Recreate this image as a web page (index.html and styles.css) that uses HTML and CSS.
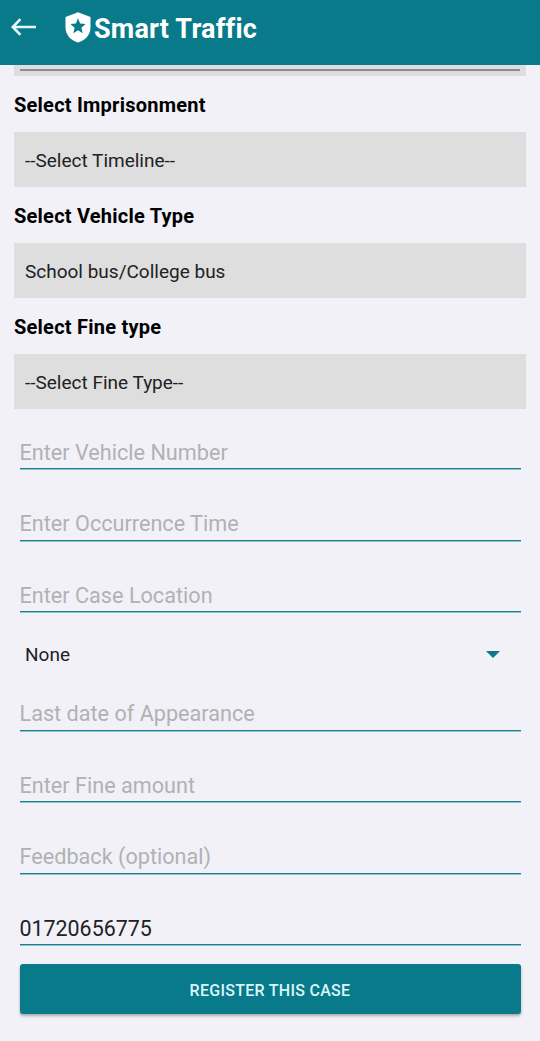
FILE: index.html
```html
<!DOCTYPE html>
<html lang="en">
<head>
<meta charset="utf-8">
<title>Smart Traffic</title>
<link rel="stylesheet" href="styles.css">
</head>
<body>
<header class="bar">
  <svg class="back" viewBox="0 0 26 20" width="26" height="20"><path d="M9.400 2.200 1.800 10l7.600 7.800M2 10h23"/></svg>
  <svg class="shield" viewBox="0 0 26 31" width="26" height="31"><path class="plate" d="M13 .2 25.500 5v10.500c0 7-5 13-12.500 15C5.500 28.500.5 22.500.5 15.500V5z"/><path class="star" d="m13 6.300 2.100 5.300 5.500.4-4.200 3.700 1.300 5.500-4.700-3-4.700 3 1.300-5.500-4.200-3.700 5.500-.4z"/></svg>
  <h1 class="title"><span>Smart Traffic</span></h1>
</header>
<main class="form">
  <div class="clipped"></div>
  <h2 class="label"><span>Select Imprisonment</span></h2>
  <div class="box"><span>--Select Timeline--</span></div>
  <h2 class="label"><span>Select Vehicle Type</span></h2>
  <div class="box"><span>School bus/College bus</span></div>
  <h2 class="label"><span>Select Fine type</span></h2>
  <div class="box"><span>--Select Fine Type--</span></div>
  <div class="fields">
    <div class="field first"><span>Enter Vehicle Number</span></div>
    <div class="field"><span>Enter Occurrence Time</span></div>
    <div class="field"><span>Enter Case Location</span></div>
  </div>
  <div class="spinner"><span>None</span><svg viewBox="0 0 14 7" width="14" height="7"><path d="M0 0h14L7 7z"/></svg></div>
  <div class="fields">
    <div class="field after"><span>Last date of Appearance</span></div>
    <div class="field"><span>Enter Fine amount</span></div>
    <div class="field"><span>Feedback (optional)</span></div>
    <div class="field filled"><span>01720656775</span></div>
  </div>
  <button class="register"><span>REGISTER THIS CASE</span></button>
</main>
</body>
</html>
```
FILE: styles.css
```css
* { box-sizing: border-box; }
body { margin: 0; height: 1041px; overflow: hidden; background: #f1f1f7; color: #212125; font-family: Roboto, sans-serif; }
.bar { height: 65px; display: flex; align-items: flex-start; padding: 12px 0 0 11px; background: #097a8a; }
.back { margin-top: 5px; fill: none; stroke: #e6f7f9; stroke-width: 2.6; }
.shield { margin-left: 27.5px; }
.plate { fill: #fff; }
.star { fill: #097a8a; }
.title { margin: 0 0 0 3.5px; color: #fff; font-size: 27px; line-height: 34px; font-weight: 700; letter-spacing: .2px; white-space: nowrap; }
.form { padding: 0 14px; }
.clipped { height: 11px; padding: 4px 6px 0; background: #dedede; }
.clipped::before { content: ""; display: block; height: 1.5px; background: #8c8c8c; }
.label { margin: 0; height: 56px; line-height: 58px; font-size: 20px; font-weight: 700; letter-spacing: .23px; color: #000; white-space: nowrap; }
.box { height: 55px; padding-left: 11px; background: #dedede; line-height: 57px; font-size: 19px; white-space: nowrap; }
.fields { padding: 0 5.5px; }
.field { height: 71.5px; display: flex; flex-direction: column; justify-content: flex-end; background: linear-gradient(#1d7f8e 1px, #8fc3cc 1px) bottom / 100% 2px no-repeat; padding-bottom: 4.5px; font-size: 21.65px; line-height: 26px; color: #b1b1b5; white-space: nowrap; }
.first { height: 61px; }
.after { height: 58px; }
.filled { color: #212125; font-size: 21.4px; }
.spinner { height: 60.5px; padding: 22px 26px 0 11px; display: flex; align-items: center; justify-content: space-between; font-size: 19px; }
.spinner svg { fill: #097a8a; }
.register { display: block; width: 501px; height: 50px; margin: 18px 0 0 5.5px; padding: 3px 0 0; border: 0; border-radius: 3px; background: #097a8a; color: #d9f7fb; box-shadow: 0 2px 3px rgba(0, 0, 0, .3); font: 500 16px Roboto, sans-serif; letter-spacing: .28px; }
```
